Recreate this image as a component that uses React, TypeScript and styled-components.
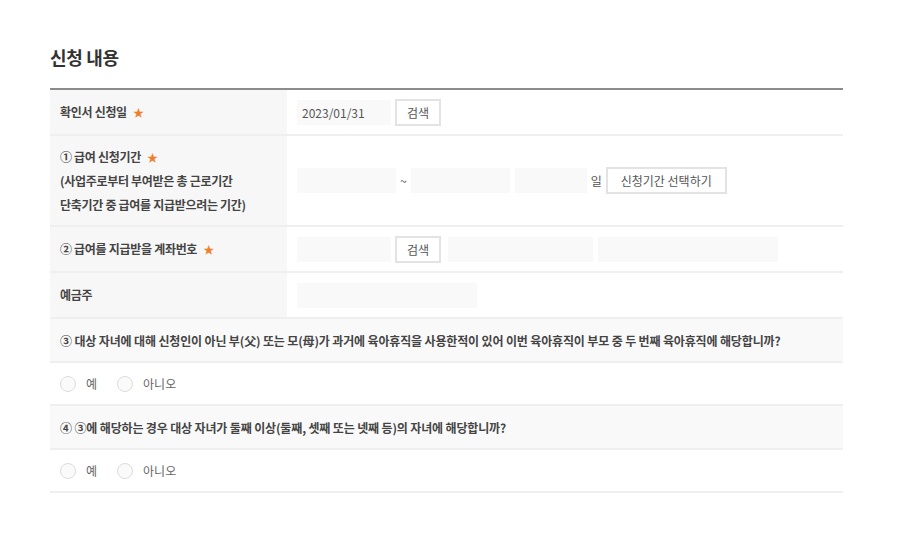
import React from 'react'
import styled, { createGlobalStyle } from 'styled-components'

const GlobalStyle = createGlobalStyle`
  html, body {
    margin: 0;
    padding: 0;
    background: #fff;
  }
  body {
    font-family: "Noto Sans CJK KR", "Noto Sans", sans-serif;
    color: #333;
  }
`

const Page = styled.div`
  width: 924px;
  padding: 44px 0 40px 50px;
  box-sizing: border-box;
`

const Title = styled.h2`
  margin: 0 0 18px;
  font-size: 18px;
  font-weight: 700;
  color: #333;
  line-height: 26px;
  letter-spacing: -0.3px;
`

const Table = styled.div`
  width: 793px;
  border-top: 2px solid #8c8c8c;
`

const Row = styled.div`
  display: flex;
  border-bottom: 2px solid #efefef;
`

const Label = styled.div`
  width: 237px;
  flex-shrink: 0;
  background: #f7f7f7;
  padding: 0 10px;
  box-sizing: border-box;
  display: flex;
  flex-direction: column;
  justify-content: center;
  font-size: 12px;
  font-weight: 700;
  color: #444;
  line-height: 24px;
  letter-spacing: -0.3px;
`

const Star = styled.span`
  color: #f07f2c;
  margin-left: 6px;
  font-size: 11px;
`

const Field = styled.div<{ $height: number }>`
  flex: 1;
  height: ${({ $height }) => $height}px;
  display: flex;
  align-items: center;
  padding-left: 10px;
  gap: 4px;
`

const Input = styled.div<{ $width: number; $gap?: number }>`
  width: ${({ $width }) => $width}px;
  height: 25px;
  background: #f9f9f9;
  box-sizing: border-box;
  padding-left: 5px;
  margin-left: ${({ $gap }) => $gap ?? 0}px;
  font-size: 12px;
  line-height: 25px;
  color: #555;
`

const Button = styled.button<{ $wide?: boolean }>`
  height: 27px;
  padding: 0 ${({ $wide }) => ($wide ? 13 : 10)}px;
  border: 2px solid #e3e3e3;
  background: #fff;
  font-family: inherit;
  font-size: 12px;
  color: #555;
  cursor: pointer;
  letter-spacing: 0;
`

const Sep = styled.span`
  font-size: 12px;
  color: #555;
`

const Question = styled.div`
  height: 42px;
  background: #f9f9f9;
  display: flex;
  align-items: center;
  padding-left: 10px;
  font-size: 12px;
  font-weight: 700;
  color: #444;
  letter-spacing: -0.15px;
  border-bottom: 2px solid #efefef;
`

const RadioRow = styled.div`
  height: 41px;
  display: flex;
  align-items: center;
  padding-left: 10px;
  gap: 20px;
  border-bottom: 2px solid #efefef;
`

const RadioItem = styled.label`
  display: flex;
  align-items: center;
  gap: 10px;
  font-size: 12px;
  color: #666;
  cursor: pointer;
`

const Circle = styled.span`
  width: 14px;
  height: 14px;
  border-radius: 50%;
  border: 1px solid #dcdcdc;
  background: #fafafa;
`

const Radios = () => (
  <RadioRow>
    <RadioItem>
      <Circle />
      예
    </RadioItem>
    <RadioItem>
      <Circle />
      아니오
    </RadioItem>
  </RadioRow>
)

const App = () => (
  <>
    <GlobalStyle />
    <Page>
      <Title>신청 내용</Title>
      <Table>
        <Row>
          <Label>
            <div>확인서 신청일<Star>★</Star></div>
          </Label>
          <Field $height={44}>
            <Input $width={94}>2023/01/31</Input>
            <Button>검색</Button>
          </Field>
        </Row>
        <Row>
          <Label>
            <div>① 급여 신청기간<Star>★</Star></div>
            <div>(사업주로부터 부여받은 총 근로기간</div>
            <div>단축기간 중 급여를 지급받으려는 기간)</div>
          </Label>
          <Field $height={89}>
            <Input $width={99} />
            <Sep>~</Sep>
            <Input $width={99} />
            <Input $width={72} $gap={1} />
            <Sep>일</Sep>
            <Button $wide>신청기간 선택하기</Button>
          </Field>
        </Row>
        <Row>
          <Label>
            <div>② 급여를 지급받을 계좌번호<Star>★</Star></div>
          </Label>
          <Field $height={44}>
            <Input $width={94} />
            <Button>검색</Button>
            <Input $width={145} $gap={3} />
            <Input $width={180} $gap={1} />
          </Field>
        </Row>
        <Row>
          <Label>
            <div>예금주</div>
          </Label>
          <Field $height={44}>
            <Input $width={180} />
          </Field>
        </Row>
        <Question>
          ③ 대상 자녀에 대해 신청인이 아닌 부(父) 또는 모(母)가 과거에 육아휴직을 사용한적이 있어 이번 육아휴직이 부모 중 두 번째 육아휴직에 해당합니까?
        </Question>
        <Radios />
        <Question>
          ④ ③에 해당하는 경우 대상 자녀가 둘째 이상(둘째, 셋째 또는 넷째 등)의 자녀에 해당합니까?
        </Question>
        <Radios />
      </Table>
    </Page>
  </>
)

export default App
